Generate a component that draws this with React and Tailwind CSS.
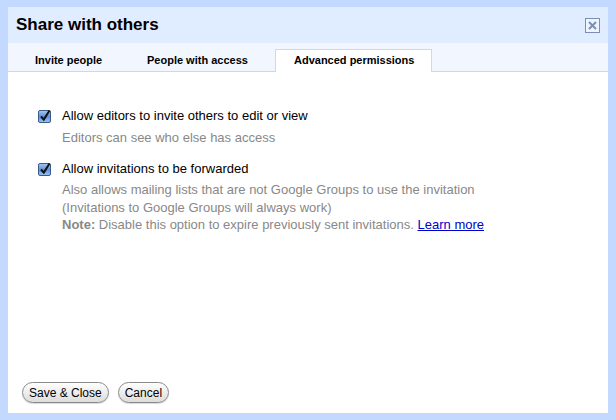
import React from 'react';

const font = { fontFamily: '"Liberation Sans", Arial, Helvetica, sans-serif' };

function CheckBox() {
  return (
    <svg width="14" height="14" viewBox="0 0 14 14" className="shrink-0">
      <defs>
        <linearGradient id="cbg" x1="0" y1="0" x2="0" y2="1">
          <stop offset="0" stopColor="#a9c8f0" />
          <stop offset="0.5" stopColor="#5d93d8" />
          <stop offset="1" stopColor="#9cc4f2" />
        </linearGradient>
      </defs>
      <rect x="0.5" y="1.5" width="12" height="12" rx="1.5" fill="url(#cbg)" stroke="#3b5b8c" />
      <path d="M3 7.5 L5.8 10.5 L11.5 1.5" fill="none" stroke="#111" strokeWidth="2" />
    </svg>
  );
}

function Tab({ label, active, width }) {
  return (
    <div
      className={
        'h-[23px] flex items-center pl-[18px] text-[11px] font-bold text-black ' +
        (active ? 'bg-white border border-[#c3d9ff] border-b-0 -mb-px pb-[2px]' : 'pt-[2px]')
      }
      style={{ width }}
    >
      {label}
    </div>
  );
}

function Button({ children }) {
  return (
    <button className="h-[21px] px-[6px] rounded-full border border-[#8a8a8a] bg-gradient-to-b from-white to-[#dcdcdc] text-[12px] text-black leading-none shadow-[0_1px_1px_rgba(0,0,0,0.15)]">
      {children}
    </button>
  );
}

export default function App() {
  return (
    <div className="w-[616px] h-[420px] bg-[#c3d9ff] pt-[7px] px-[8px] pb-[7px]" style={font}>
      <div className="bg-white h-full flex flex-col">
        {/* Header */}
        <div className="h-[36px] bg-[#e0ecff] flex items-center justify-between pl-[8px] pr-[8px]">
          <h1 className="text-[17px] font-bold text-black">Share with others</h1>
          <div className="w-[15px] h-[15px] border border-[#7b8fb4] bg-[#eef3fc] flex items-center justify-center">
            <svg width="9" height="9" viewBox="0 0 9 9">
              <path d="M1 1 L8 8 M8 1 L1 8" stroke="#7b8fb4" strokeWidth="2" />
            </svg>
          </div>
        </div>

        {/* Tabs */}
        <div className="h-[29px] bg-[#f1f6ff] border-b border-[#c3d9ff] flex items-end pl-[9px]">
          <div className="flex items-end h-[23px]">
            <Tab label="Invite people" width={112} />
            <Tab label="People with access" width={146} />
            <Tab label="Advanced permissions" active width={157} />
          </div>
        </div>

        {/* Content */}
        <div className="flex-1 pl-[30px] pt-[36px] text-[13px] text-black">
          <div className="flex items-start gap-[10px]">
            <div className="pt-[1px]"><CheckBox /></div>
            <div>
              <div className="leading-[16px]">Allow editors to invite others to edit or view</div>
              <div className="leading-[16px] mt-[6px] text-[#888]">Editors can see who else has access</div>
            </div>
          </div>
          <div className="flex items-start gap-[10px] mt-[15px]">
            <div className="pt-[1px]"><CheckBox /></div>
            <div>
              <div className="leading-[16px]">Allow invitations to be forwarded</div>
              <div className="mt-[4px] leading-[17.5px] text-[#888]">
                <div>Also allows mailing lists that are not Google Groups to use the invitation</div>
                <div>(Invitations to Google Groups will always work)</div>
                <div>
                  <span className="font-bold">Note:</span> Disable this option to expire previously sent invitations.{' '}
                  <a href="#" className="text-[#0000cc] underline">Learn more</a>
                </div>
              </div>
            </div>
          </div>
        </div>

        {/* Footer */}
        <div className="flex items-center gap-[9px] pl-[14px] pb-[10px]">
          <Button>Save &amp; Close</Button>
          <Button>Cancel</Button>
        </div>
      </div>
    </div>
  );
}
